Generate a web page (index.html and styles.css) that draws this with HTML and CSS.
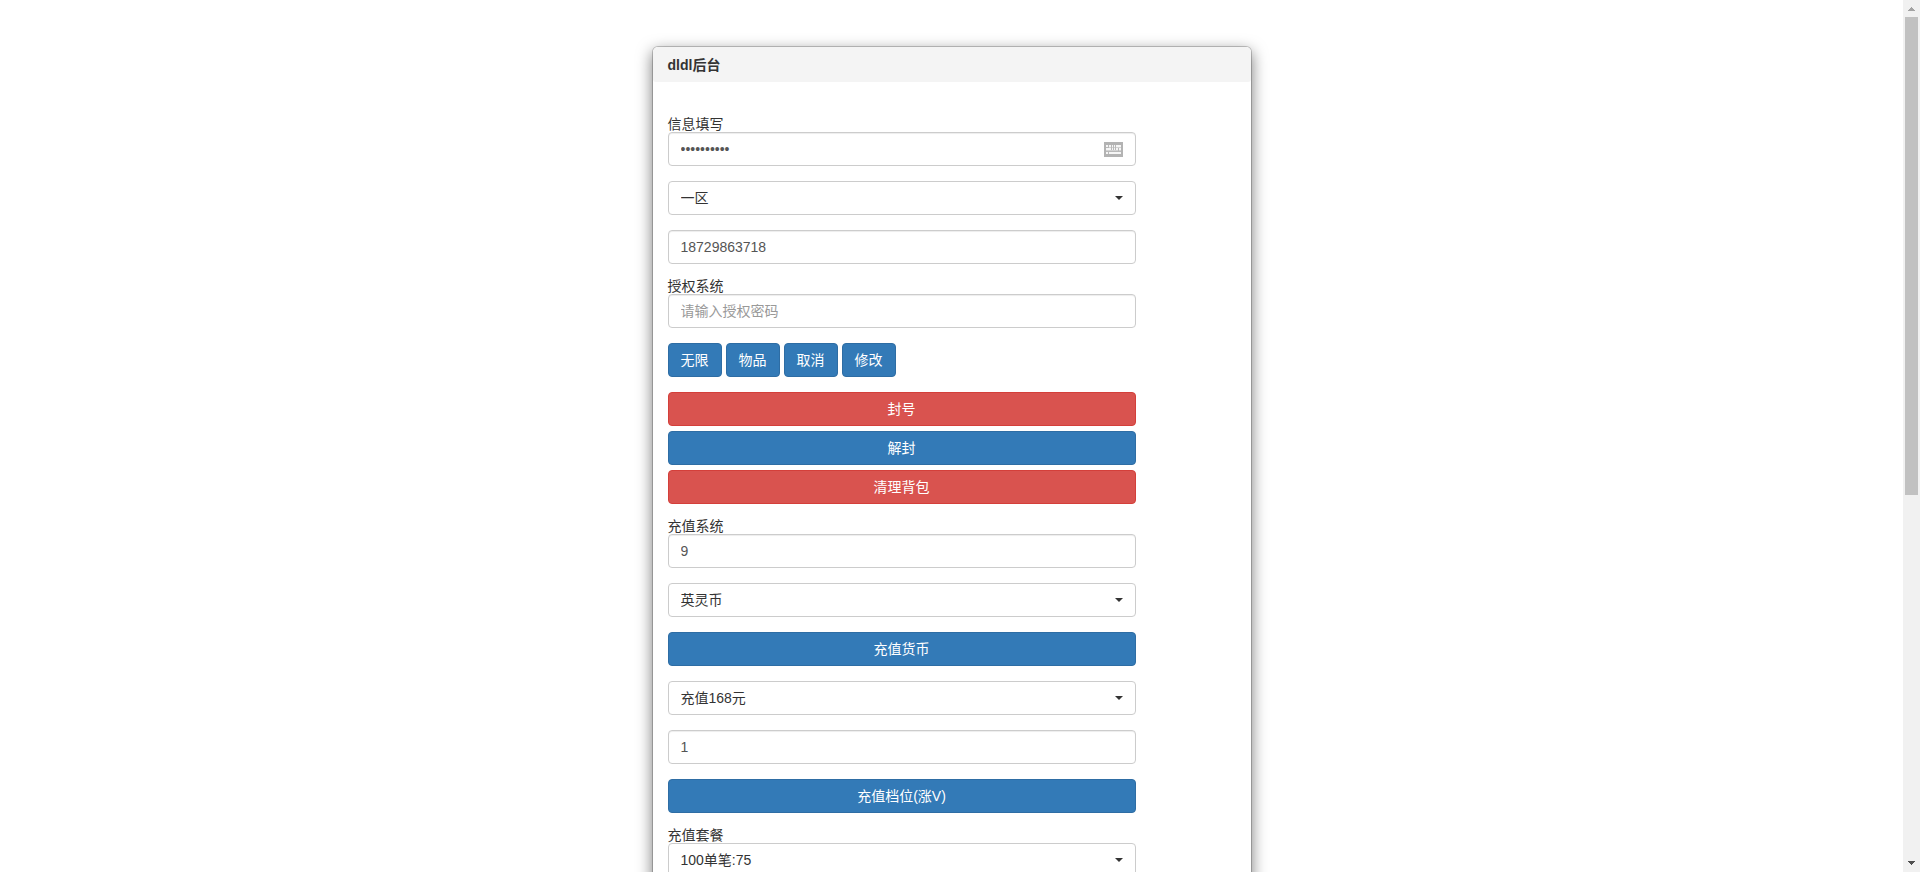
FILE: index.html
```html
<!DOCTYPE html>
<html lang="zh-CN">
<head>
<meta charset="utf-8">
<meta name="viewport" content="width=device-width, initial-scale=1">
<title>dldl后台</title>
<link rel="stylesheet" href="styles.css">
</head>
<body>
<div class="shell">
  <main class="page">
    <section class="modal">
      <h1 class="modal-header">dldl后台</h1>
      <form class="modal-body">
        <div class="group">
          <label class="label" for="gm-code">信息填写</label>
          <div class="field">
            <input class="control" id="gm-code" type="password" value="1234567890">
            <svg class="keyboard" viewBox="0 0 19 15" width="19" height="15" shape-rendering="crispEdges" aria-hidden="true">
              <path fill="#b3b3b3" d="M0 0h19v15H0z"/>
              <path fill="#f6f6f6" d="M2 3h15v2H2zM2 6h15v2H2zM2 10h15v2H2z"/>
              <path fill="#d2d2d2" d="M2 5h15v1H2zM2 8h15v1H2z"/>
              <path fill="#b9b9b9" d="M4 3h1v2H4zM7 3h1v5H7zM9 3h1v5H9zM11 3h1v5h-1zM14 6h1v3h-1zM2 5h3v1H2zM2 9h15v1H2zM4 10h1v2H4z"/>
            </svg>
          </div>
        </div>
        <div class="select">
          <select class="control" aria-label="选择区服"><option>一区</option></select>
        </div>
        <input class="control" type="text" value="18729863718" aria-label="账号">
        <div class="group">
          <label class="label" for="auth">授权系统</label>
          <input class="control" id="auth" type="text" placeholder="请输入授权密码">
        </div>
        <div class="actions">
          <button class="btn primary" type="button">无限</button>
          <button class="btn primary" type="button">物品</button>
          <button class="btn primary" type="button">取消</button>
          <button class="btn primary" type="button">修改</button>
        </div>
        <div class="stack">
          <button class="btn danger" type="button">封号</button>
          <button class="btn primary" type="button">解封</button>
          <button class="btn danger" type="button">清理背包</button>
        </div>
        <div class="group">
          <label class="label" for="amount">充值系统</label>
          <input class="control" id="amount" type="text" value="9">
        </div>
        <div class="select">
          <select class="control" aria-label="货币类型"><option>英灵币</option></select>
        </div>
        <button class="btn primary" type="button">充值货币</button>
        <div class="select">
          <select class="control" aria-label="充值档位"><option>充值168元</option></select>
        </div>
        <input class="control" type="text" value="1" aria-label="数量">
        <button class="btn primary" type="button">充值档位(涨V)</button>
        <div class="group">
          <label class="label" for="pack">充值套餐</label>
          <div class="select">
            <select class="control" id="pack"><option>100单笔:75</option></select>
          </div>
        </div>
      </form>
    </section>
  </main>
  <div class="scrollbar" aria-hidden="true">
    <svg class="arrow" viewBox="0 0 17 17" width="17" height="17" shape-rendering="crispEdges"><path fill="#a3a3a3" d="M8 7h1v1h1v1h1v1h1v1H5v-1h1V9h1V8h1z"/></svg>
    <div class="track"><div class="thumb"></div></div>
    <svg class="arrow" viewBox="0 0 17 17" width="17" height="17" shape-rendering="crispEdges"><path fill="#505050" d="M5 6h7v1h-1v1h-1v1H9v1H8V9H7V8H6V7H5z"/></svg>
  </div>
</div>
</body>
</html>
```
FILE: styles.css
```css
* {
  box-sizing: border-box;
}

body {
  margin: 0;
  background: #fff;
  color: #333;
  font: 14px/20px "Liberation Sans", Arial, "Noto Sans CJK SC", sans-serif;
}

.shell {
  display: flex;
  height: 100vh;
}

.page {
  flex: 1;
  min-width: 0;
  overflow-y: auto;
  scrollbar-width: none;
  padding: 46px 16px;
}

.modal {
  max-width: 600px;
  margin: 0 auto;
  background: #fff;
  background-clip: padding-box;
  border: 1px solid rgba(0, 0, 0, 0.2);
  border-radius: 6px;
  box-shadow: 0 5px 15px rgba(0, 0, 0, 0.5);
}

.modal-header {
  margin: 0;
  padding: 8px 15px 7px;
  background: #f4f4f4;
  border-radius: 5px 5px 3px 3px;
  font-size: 14px;
  line-height: 20px;
}

.modal-body {
  display: flex;
  flex-direction: column;
  gap: 15px;
  padding: 35px 115px 80vh 15px;
}

.group,
.stack {
  display: flex;
  flex-direction: column;
}

.stack {
  gap: 5px;
}

.label {
  line-height: 15px;
}

.field,
.select {
  position: relative;
}

.control {
  display: block;
  width: 100%;
  height: 34px;
  padding: 6px 12px;
  background: #fff;
  border: 1px solid #ccc;
  border-radius: 4px;
  box-shadow: inset 0 1px 1px rgba(0, 0, 0, 0.075);
  color: #555;
  font: inherit;
}

.control::placeholder {
  color: #999;
  opacity: 1;
}

.select .control {
  appearance: none;
  box-shadow: none;
  color: #333;
}

.select::after {
  content: "";
  position: absolute;
  top: 15px;
  right: 13px;
  border: 4px solid transparent;
  border-top-color: #333;
  border-bottom: 0;
  pointer-events: none;
}

.keyboard {
  position: absolute;
  top: 10px;
  right: 13px;
}

.actions {
  display: flex;
  gap: 4px;
}

.btn {
  height: 34px;
  padding: 6px 12px;
  border: 1px solid;
  border-radius: 4px;
  color: #fff;
  font: inherit;
  cursor: pointer;
}

.primary {
  background: #337ab7;
  border-color: #2e6da4;
}

.danger {
  background: #d9534f;
  border-color: #d43f3a;
}

.scrollbar {
  display: flex;
  flex-direction: column;
  width: 17px;
  background: #f1f1f1;
}

.arrow {
  display: block;
}

.track {
  flex: 1;
  padding: 0 2px;
}

.thumb {
  height: 57%;
  background: #c1c1c1;
}
```
